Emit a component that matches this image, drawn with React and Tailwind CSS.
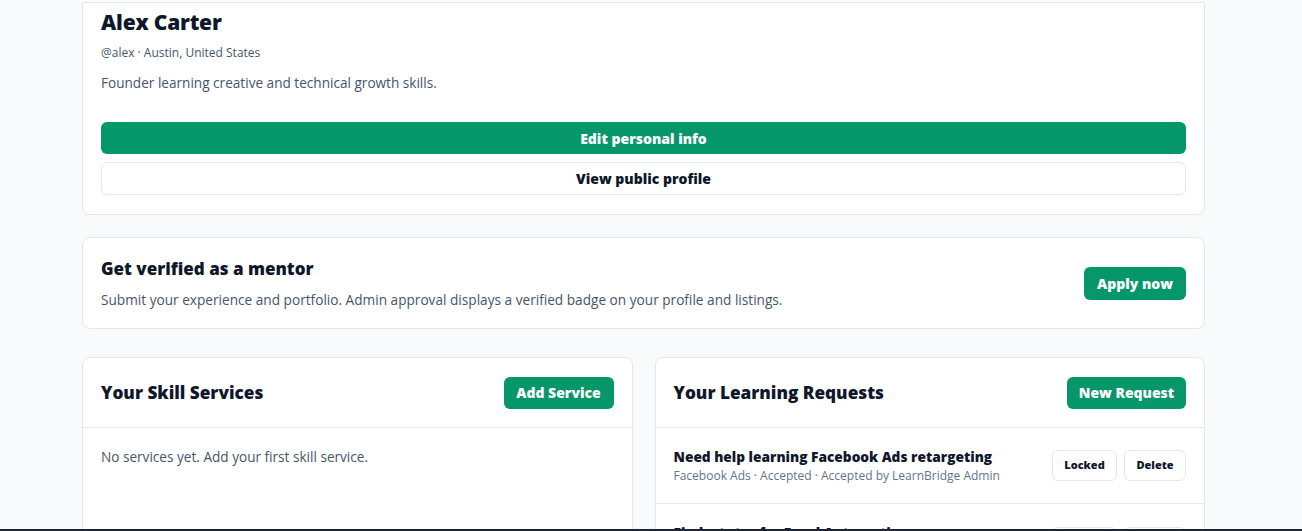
export default function App() {
  const font = { fontFamily: '"Open Sans", "Noto Sans", sans-serif' };
  return (
    <div className="min-h-[531px] bg-[#f8fafc] text-[#0f172a]" style={font}>
      <div className="ml-[82px] w-[1123px] pt-[2px] flex flex-col">
        {/* Profile card */}
        <div className="bg-white border border-[#e2e8f0] rounded-b-lg px-[18px] pt-[5px] pb-[19px]">
          <div className="text-[21px] font-extrabold leading-[28px] tracking-[-0.2px]">Alex Carter</div>
          <div className="mt-[9px] text-[12px] leading-[16px] text-[#475569]">@alex · Austin, United States</div>
          <div className="mt-[12px] text-[13.6px] leading-[20px] text-[#475569]">Founder learning creative and technical growth skills.</div>
          <div className="mt-[29px] flex flex-col gap-[8px]">
            <button className="h-[32px] w-full rounded-md bg-[#059669] text-white text-[14px] font-extrabold">Edit personal info</button>
            <button className="h-[33px] w-full rounded-md bg-white border border-[#e2e8f0] text-[14px] font-extrabold text-[#0f172a]">View public profile</button>
          </div>
        </div>

        {/* Verify card */}
        <div className="mt-[22px] h-[92px] bg-white border border-[#e2e8f0] rounded-lg px-[18px] flex items-center justify-between">
          <div>
            <div className="text-[17px] font-extrabold leading-[24px]">Get verified as a mentor</div>
            <div className="mt-[10px] text-[13.65px] leading-[18px] text-[#475569]">Submit your experience and portfolio. Admin approval displays a verified badge on your profile and listings.</div>
          </div>
          <button className="h-[33px] w-[102px] rounded-md bg-[#059669] text-white text-[14px] font-extrabold">Apply now</button>
        </div>

        {/* Two columns */}
        <div className="grid grid-cols-2 gap-[22px] mt-[28px]">
          <div className="bg-white border border-[#e2e8f0] rounded-t-lg h-[200px]">
            <div className="h-[70px] px-[18px] flex items-center justify-between border-b border-[#e2e8f0]">
              <div className="text-[17.2px] font-extrabold">Your Skill Services</div>
              <button className="h-[32px] w-[110px] rounded-md bg-[#059669] text-white text-[14px] font-extrabold">Add Service</button>
            </div>
            <div className="px-[18px] pt-[19px] text-[13.6px] leading-[20px] text-[#475569]">No services yet. Add your first skill service.</div>
          </div>
          <div className="bg-white border border-[#e2e8f0] rounded-t-lg h-[200px] overflow-hidden">
            <div className="h-[70px] px-[18px] flex items-center justify-between border-b border-[#e2e8f0]">
              <div className="text-[17.2px] font-extrabold">Your Learning Requests</div>
              <button className="h-[32px] w-[119px] rounded-md bg-[#059669] text-white text-[14px] font-extrabold">New Request</button>
            </div>
            <div className="h-[76px] px-[18px] flex items-center justify-between border-b border-[#e2e8f0]">
              <div>
                <div className="text-[13.7px] font-extrabold leading-[20px]">Need help learning Facebook Ads retargeting</div>
                <div className="text-[12px] leading-[18px] text-[#64748b]">Facebook Ads · Accepted · Accepted by LearnBridge Admin</div>
              </div>
              <div className="flex gap-[7px]">
                <button className="h-[31px] w-[65px] rounded-md border border-[#e2e8f0] bg-white text-[11px] font-extrabold">Locked</button>
                <button className="h-[31px] w-[62px] rounded-md border border-[#e2e8f0] bg-white text-[11px] font-extrabold">Delete</button>
              </div>
            </div>
            <div className="h-[76px] px-[18px] flex items-center justify-between">
              <div>
                <div className="text-[13.7px] font-extrabold leading-[20px]">Find a tutor for Excel Automation</div>
                <div className="text-[12px] leading-[18px] text-[#64748b]">Excel · Open · Waiting for a mentor</div>
              </div>
              <div className="flex gap-[7px]">
                <button className="h-[31px] w-[65px] rounded-md border border-[#e2e8f0] bg-white text-[11px] font-extrabold">Edit</button>
                <button className="h-[31px] w-[62px] rounded-md border border-[#e2e8f0] bg-white text-[11px] font-extrabold">Delete</button>
              </div>
            </div>
          </div>
        </div>
      </div>
      <div className="fixed left-0 right-0 bottom-0 h-[2px] bg-[#1e2433]" />
    </div>
  );
}
